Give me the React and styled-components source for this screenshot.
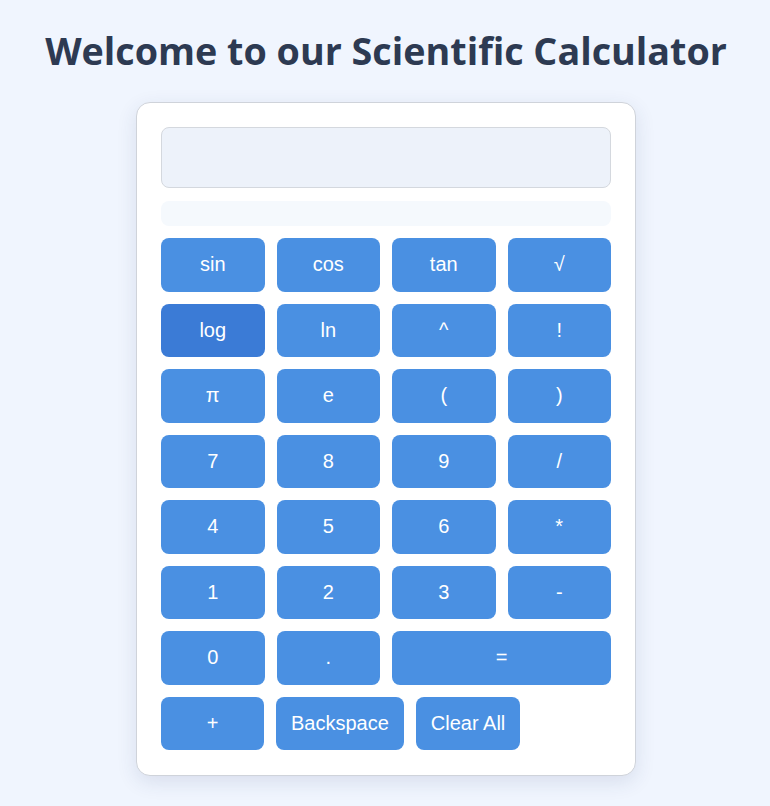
import React from "react";
import styled, { createGlobalStyle } from "styled-components";

const Global = createGlobalStyle`
  html, body { margin: 0; padding: 0; }
  body {
    background: #f0f5fe;
    font-family: "Liberation Sans", Arial, sans-serif;
  }
  * { box-sizing: border-box; }
`;

const Page = styled.main`
  display: flex;
  flex-direction: column;
  align-items: center;
  padding: 27px 0 30px 2px;
`;

const Title = styled.h1`
  margin: 0 0 27px;
  font-family: "Open Sans", "Noto Sans", sans-serif;
  font-weight: 700;
  font-size: 37.7px;
  line-height: 48px;
  color: #2d3a52;
  text-align: center;
`;

const Card = styled.section`
  width: 500px;
  background: #ffffff;
  border: 1px solid #cfd3da;
  border-radius: 14px;
  box-shadow: 0 6px 20px rgba(40, 60, 110, 0.12);
  padding: 24px 24px 25px;
  display: flex;
  flex-direction: column;
`;

const Display = styled.div`
  height: 61px;
  background: #edf2fa;
  border: 1px solid #d4d8de;
  border-radius: 8px;
  margin-bottom: 13px;
`;

const Result = styled.div`
  height: 25px;
  background: #f5f9fd;
  border-radius: 8px;
  margin-bottom: 12px;
`;

const Grid = styled.div`
  display: grid;
  grid-template-columns: repeat(4, 1fr);
  gap: 12px;
`;

const Key = styled.button`
  height: 53.5px;
  border: none;
  border-radius: 8px;
  background: ${(p) => (p.$active ? "#3b7bd6" : "#4a90e2")};
  color: #ffffff;
  font-family: "Liberation Sans", Arial, sans-serif;
  font-size: 20px;
  padding: 0 15px;
  grid-column: ${(p) => (p.$span ? `span ${p.$span}` : "auto")};
  cursor: pointer;
`;

const LastRow = styled.div`
  display: flex;
  gap: 12px;
  margin-top: 12px;
`;

const WideKey = styled(Key)`
  width: ${(p) => (p.$w ? `${p.$w}px` : "auto")};
`;

const rows = [
  ["sin", "cos", "tan", "√"],
  ["log", "ln", "^", "!"],
  ["π", "e", "(", ")"],
  ["7", "8", "9", "/"],
  ["4", "5", "6", "*"],
  ["1", "2", "3", "-"],
];

export default function App() {
  return (
    <>
      <Global />
      <Page>
        <Title>Welcome to our Scientific Calculator</Title>
        <Card>
          <Display />
          <Result />
          <Grid>
            {rows.flat().map((k) => (
              <Key key={k} $active={k === "log"}>
                {k}
              </Key>
            ))}
            <Key>0</Key>
            <Key>.</Key>
            <Key $span={2}>=</Key>
          </Grid>
          <LastRow>
            <WideKey $w={103}>+</WideKey>
            <WideKey>Backspace</WideKey>
            <WideKey>Clear All</WideKey>
          </LastRow>
        </Card>
      </Page>
    </>
  );
}
